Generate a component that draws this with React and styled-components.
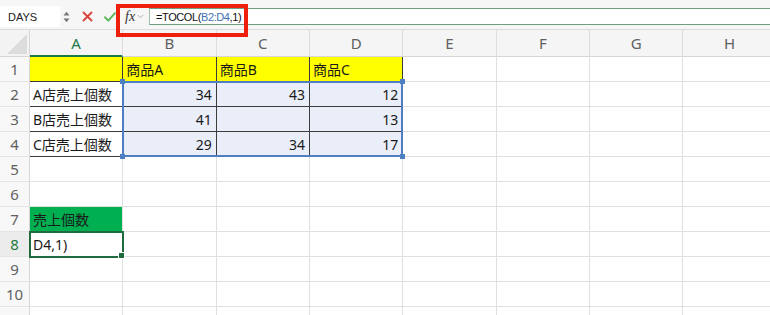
import React from "react";
import styled, { createGlobalStyle } from "styled-components";

const COL_W = 93.33;
const ROW_H = 25;
const HEAD_W = 30;
const HEAD_H = 27;

const GlobalStyle = createGlobalStyle`
  html, body {
    margin: 0;
    padding: 0;
    background: #ffffff;
  }
  body {
    font-family: "Noto Sans", "Noto Sans CJK JP", sans-serif;
  }
`;

const Page = styled.div`
  position: relative;
  width: 770px;
  height: 315px;
  overflow: hidden;
  background: #ffffff;
`;

const Toolbar = styled.div`
  display: flex;
  align-items: center;
  height: 30px;
  padding-top: 4px;
  background: #f6f6f6;
  border-bottom: 1px solid #dcdcdc;
  box-sizing: border-box;
`;

const NameBox = styled.div`
  width: 60px;
  height: 21px;
  background: #ffffff;
  font-family: "Liberation Sans", Arial, sans-serif;
  font-size: 11px;
  color: #222;
  display: flex;
  align-items: center;
  padding-left: 8px;
  box-sizing: border-box;
`;

const Spinner = styled.div`
  width: 12px;
  display: flex;
  flex-direction: column;
  align-items: center;
  gap: 2px;
  margin-right: 4px;
`;

const IconButton = styled.div`
  width: 22px;
  height: 20px;
  display: flex;
  align-items: center;
  justify-content: center;
  margin-right: ${(p) => p.$gap || 0}px;
`;

const Fx = styled.div`
  display: flex;
  align-items: center;
  gap: 2px;
  font-family: "Liberation Serif", "Times New Roman", serif;
  font-style: italic;
  font-size: 14px;
  color: #333;
  width: 24px;
  margin-left: 4px;
`;

const FormulaInput = styled.div`
  flex: 1;
  height: 17px;
  background: #ffffff;
  border-top: 1px solid #6d9f80;
  border-bottom: 1px solid #6d9f80;
  border-left: 1px solid #9fbfaa;
  display: flex;
  align-items: center;
  padding-left: 6px;
  font-family: "Liberation Sans", Arial, sans-serif;
  font-size: 11px;
  letter-spacing: -0.4px;
  color: #111;
  box-sizing: border-box;
`;

const Ref = styled.span`
  color: #3f6fb5;
`;

const Callout = styled.div`
  position: absolute;
  left: 116px;
  top: 4px;
  width: 132px;
  height: 33px;
  border: 4px solid #ee1f0b;
  box-sizing: border-box;
  pointer-events: none;
`;

const Sheet = styled.div`
  position: relative;
  display: grid;
  grid-template-columns: ${HEAD_W}px repeat(8, ${COL_W}px);
  grid-auto-rows: ${ROW_H}px;
  grid-template-rows: ${HEAD_H}px;
`;

const Corner = styled.div`
  background: #f3f3f3;
  border-right: 1px solid #d6d6d6;
  border-bottom: 1px solid #d6d6d6;
  box-sizing: border-box;
  position: relative;
  overflow: hidden;
  &::after {
    content: "";
    position: absolute;
    right: 2px;
    bottom: 2px;
    width: 0;
    height: 0;
    border-left: 20px solid transparent;
    border-bottom: 20px solid #dcdcdc;
  }
`;

const ColHead = styled.div`
  background: #f5f5f5;
  border-right: 1px solid #dedede;
  border-bottom: ${(p) => (p.$active ? "2px solid #1e7a45" : "1px solid #d6d6d6")};
  box-sizing: border-box;
  display: flex;
  align-items: center;
  justify-content: center;
  font-size: 15px;
  color: ${(p) => (p.$active ? "#1e7a45" : "#606060")};
`;

const RowHead = styled.div`
  background: ${(p) => (p.$active ? "#ececec" : "#f8f8f8")};
  border-right: 1px solid #d6d6d6;
  border-bottom: 1px solid #e4e4e4;
  box-sizing: border-box;
  display: flex;
  align-items: center;
  justify-content: center;
  font-size: 15px;
  color: ${(p) => (p.$active ? "#1e7a45" : "#606060")};
`;

const Cell = styled.div`
  position: relative;
  background: ${(p) => p.$bg || "#ffffff"};
  border-right: 1px solid ${(p) => (p.$lined ? "#3c3c3c" : "#e0e0e0")};
  border-bottom: 1px solid ${(p) => (p.$lined ? "#3c3c3c" : "#e0e0e0")};
  box-sizing: border-box;
  display: flex;
  align-items: center;
  justify-content: ${(p) => (p.$num ? "flex-end" : "flex-start")};
  padding: 0 4px 0 3px;
  font-family: "Noto Sans", "Noto Sans CJK JP", sans-serif;
  font-size: 14px;
  color: #1a1a1a;
  white-space: nowrap;
  overflow: visible;
  ${(p) =>
    p.$active &&
    `
    outline: 2px solid #1e6b3f;
    outline-offset: -1px;
    z-index: 2;
    &::after {
      content: "";
      position: absolute;
      right: -3px;
      bottom: -3px;
      width: 5px;
      height: 5px;
      background: #1e6b3f;
      border: 1px solid #fff;
    }
  `}
`;

const Selection = styled.div`
  position: absolute;
  left: ${(p) => HEAD_W + p.$col * COL_W - 1}px;
  top: ${(p) => HEAD_H + p.$row * ROW_H - 1}px;
  width: ${(p) => p.$cols * COL_W + 1}px;
  height: ${(p) => p.$rows * ROW_H + 1}px;
  border: 2px solid #4f7fc3;
  box-sizing: border-box;
  pointer-events: none;
  z-index: 3;
`;

const Handle = styled.span`
  position: absolute;
  width: 5px;
  height: 5px;
  background: #4f7fc3;
  ${(p) => (p.$top ? "top: -4px;" : "bottom: -4px;")}
  ${(p) => (p.$left ? "left: -4px;" : "right: -4px;")}
`;

const YELLOW = "#ffff00";
const BLUE = "#e9eef8";
const GREEN = "#00b050";

const rows = [
  [{ v: "", bg: YELLOW, lined: true }, { v: "商品A", bg: YELLOW, lined: true }, { v: "商品B", bg: YELLOW, lined: true }, { v: "商品C", bg: YELLOW, lined: true }],
  [{ v: "A店売上個数", lined: true }, { v: "34", num: true, bg: BLUE, lined: true }, { v: "43", num: true, bg: BLUE, lined: true }, { v: "12", num: true, bg: BLUE, lined: true }],
  [{ v: "B店売上個数", lined: true }, { v: "41", num: true, bg: BLUE, lined: true }, { v: "", bg: BLUE, lined: true }, { v: "13", num: true, bg: BLUE, lined: true }],
  [{ v: "C店売上個数", lined: true }, { v: "29", num: true, bg: BLUE, lined: true }, { v: "34", num: true, bg: BLUE, lined: true }, { v: "17", num: true, bg: BLUE, lined: true }],
  [],
  [],
  [{ v: "売上個数", bg: GREEN }],
  [{ v: "D4,1)", active: true }],
  [],
  [],
  [],
];

const COLS = ["A", "B", "C", "D", "E", "F", "G", "H"];

export default function App() {
  return (
    <Page>
      <GlobalStyle />
      <Toolbar>
        <NameBox>DAYS</NameBox>
        <Spinner>
          <svg width="7" height="5" viewBox="0 0 7 5">
            <path d="M0.5 4.5 L3.5 0.8 L6.5 4.5 Z" fill="#777" />
          </svg>
          <svg width="7" height="5" viewBox="0 0 7 5">
            <path d="M0.5 0.5 L3.5 4.2 L6.5 0.5 Z" fill="#777" />
          </svg>
        </Spinner>
        <IconButton $gap={1}>
          <svg width="11" height="11" viewBox="0 0 11 11">
            <path d="M1.5 1.5 L9.5 9.5 M9.5 1.5 L1.5 9.5" stroke="#d8403a" strokeWidth="1.8" strokeLinecap="round" />
          </svg>
        </IconButton>
        <IconButton>
          <svg width="12" height="10" viewBox="0 0 12 10">
            <path d="M1 5.2 L4.3 8.6 L11 1.2" stroke="#5cb85c" strokeWidth="2" fill="none" strokeLinecap="round" strokeLinejoin="round" />
          </svg>
        </IconButton>
        <Fx>
          fx
          <svg width="7" height="5" viewBox="0 0 7 5">
            <path d="M0.8 1 L3.5 3.8 L6.2 1" stroke="#b0b0b0" strokeWidth="1" fill="none" />
          </svg>
        </Fx>
        <FormulaInput>
          =TOCOL(<Ref>B2:D4</Ref>,1)
        </FormulaInput>
      </Toolbar>

      <Sheet>
        <Corner />
        {COLS.map((c) => (
          <ColHead key={c} $active={c === "A"}>
            {c}
          </ColHead>
        ))}
        {rows.map((cells, r) => (
          <React.Fragment key={r}>
            <RowHead $active={r === 7}>{r + 1}</RowHead>
            {COLS.map((c, i) => {
              const cell = cells[i] || { v: "" };
              return (
                <Cell key={c} $bg={cell.bg} $lined={cell.lined} $num={cell.num} $active={cell.active}>
                  {cell.v}
                </Cell>
              );
            })}
          </React.Fragment>
        ))}
        <Selection $col={1} $row={1} $cols={3} $rows={3}>
          <Handle $top $left />
          <Handle $top />
          <Handle $left />
          <Handle />
        </Selection>
      </Sheet>

      <Callout />
    </Page>
  );
}
